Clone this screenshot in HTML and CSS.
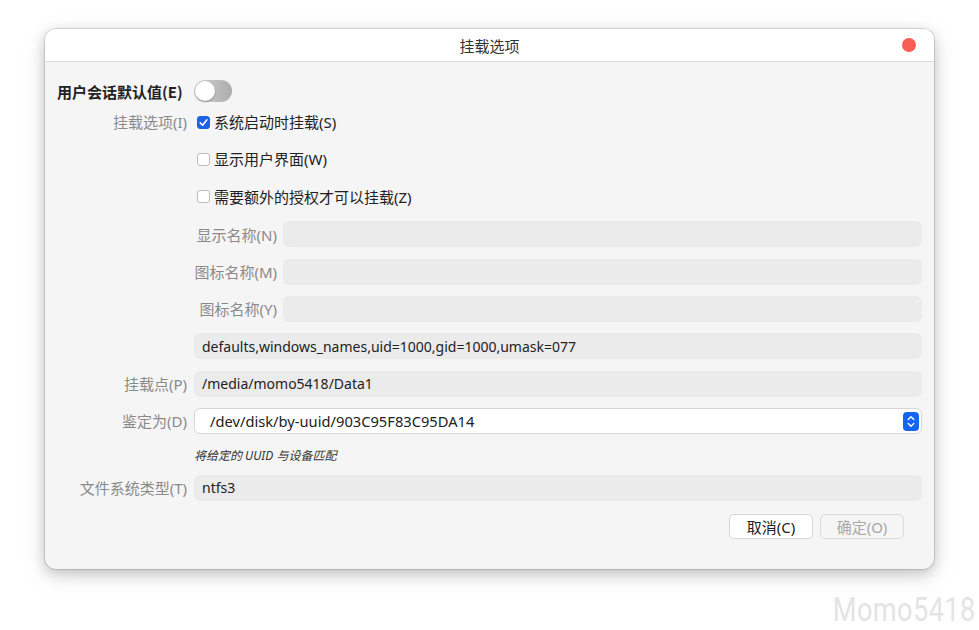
FILE: index.html
```html
<!DOCTYPE html>
<html lang="zh-CN">
<head>
<meta charset="utf-8">
<title>挂载选项</title>
<link rel="stylesheet" href="styles.css">
</head>
<body>
<div class="window">
  <div class="titlebar">
    <span class="title">挂载选项</span>
    <span class="close"></span>
  </div>
  <div class="content">
    <div class="toggle-row">
      <span class="bold-label">用户会话默认值(E)</span>
      <span class="switch"><span class="knob"></span></span>
    </div>
    <div class="form">
      <span class="label">挂载选项(I)</span>
      <label class="check"><span class="box checked"><svg viewBox="0 0 13 13" width="13" height="13"><path d="M3.2 6.8 L5.6 9.2 L9.9 3.8" fill="none" stroke="#fff" stroke-width="1.6" stroke-linecap="round" stroke-linejoin="round"/></svg></span>系统启动时挂载(S)</label>

      <span class="label"></span>
      <label class="check"><span class="box"></span>显示用户界面(W)</label>

      <span class="label"></span>
      <label class="check"><span class="box"></span>需要额外的授权才可以挂载(Z)</label>

      <span class="label"></span>
      <div class="sub"><span class="sublabel">显示名称(N)</span><span class="field"></span></div>

      <span class="label"></span>
      <div class="sub"><span class="sublabel">图标名称(M)</span><span class="field"></span></div>

      <span class="label"></span>
      <div class="sub"><span class="sublabel">图标名称(Y)</span><span class="field"></span></div>

      <span class="label"></span>
      <span class="field">defaults,windows_names,uid=1000,gid=1000,umask=077</span>

      <span class="label">挂载点(P)</span>
      <span class="field">/media/momo5418/Data1</span>

      <span class="label">鉴定为(D)</span>
      <div class="select">
        <span class="select-text">/dev/disk/by-uuid/903C95F83C95DA14</span>
        <span class="select-btn"><svg viewBox="0 0 16 19" width="16" height="19"><path d="M5.2 7.6 L8 4.8 L10.8 7.6 M5.2 11.4 L8 14.2 L10.8 11.4" fill="none" stroke="#fff" stroke-width="1.4" stroke-linecap="round" stroke-linejoin="round"/></svg></span>
      </div>

      <span class="label"></span>
      <span class="hint">将给定的 UUID 与设备匹配</span>

      <span class="label">文件系统类型(T)</span>
      <span class="field">ntfs3</span>
    </div>
    <div class="buttons">
      <button class="btn">取消(C)</button>
      <button class="btn disabled">确定(O)</button>
    </div>
  </div>
</div>
<div class="watermark">Momo5418</div>
</body>
</html>
```
FILE: styles.css
```css
html, body {
  margin: 0;
  padding: 0;
  background: #ffffff;
  width: 979px;
  height: 630px;
  overflow: hidden;
  position: relative;
  font-family: "Noto Sans", "Noto Sans CJK SC", sans-serif;
}

.window {
  margin: 29px 0 0 45px;
  width: 889px;
  height: 540px;
  box-sizing: border-box;
  background: #f5f5f5;
  border-radius: 11px;
  box-shadow: 0 0 0 1px rgba(0,0,0,0.12), 0 4px 14px rgba(0,0,0,0.22), 0 8px 30px rgba(0,0,0,0.08);
  overflow: hidden;
}

.titlebar {
  background: #ffffff;
  border-bottom: 1px solid #dcdcdc;
  box-sizing: border-box;
  height: 33px;
  display: flex;
  align-items: center;
  justify-content: center;
  position: relative;
}

.title {
  font-size: 15px;
  color: #333;
  font-family: "Noto Sans CJK SC", sans-serif;
}

.close {
  position: absolute;
  right: 18px;
  top: 9px;
  width: 14px;
  height: 14px;
  border-radius: 50%;
  background: #f75d52;
}

.content {
  padding: 18px 12px 0 12px;
}

.toggle-row {
  display: flex;
  align-items: center;
  height: 22px;
  margin-bottom: 7px;
}

.bold-label {
  width: 137px;
  font-size: 15px;
  font-weight: bold;
  color: #222;
  font-family: "Noto Sans CJK SC", sans-serif;
}

.switch {
  width: 38px;
  height: 22px;
  border-radius: 11px;
  background: linear-gradient(90deg, #d4d4d4, #acacac);
  position: relative;
  box-sizing: border-box;
}

.knob {
  position: absolute;
  left: 1px;
  top: 1px;
  width: 20px;
  height: 20px;
  border-radius: 50%;
  background: #fff;
  box-shadow: 0 1px 2px rgba(0,0,0,0.3);
}

.form {
  display: grid;
  grid-template-columns: 130px 728px;
  grid-template-rows: repeat(9, 26px) 18px 26px;
  column-gap: 7px;
  row-gap: 11.4px;
  align-items: center;
}

.label {
  text-align: right;
  font-size: 15px;
  color: #8a8a8a;
  white-space: nowrap;
  line-height: 24px;
}

.check {
  display: flex;
  align-items: center;
  font-size: 15px;
  color: #222;
  padding-left: 3px;
  line-height: 24px;
}

.box {
  width: 13px;
  height: 13px;
  box-sizing: border-box;
  border: 1px solid #bdbdbd;
  border-radius: 3px;
  background: #fff;
  margin-right: 4px;
  display: flex;
}

.box.checked {
  background: #1b62e6;
  border-color: #1b62e6;
}

.box.checked svg { margin: -1px; }

.sub {
  display: flex;
  align-items: center;
  height: 26px;
}

.sublabel {
  width: 83px;
  text-align: right;
  font-size: 15px;
  color: #8a8a8a;
  margin-right: 6px;
  white-space: nowrap;
}

.field {
  flex: 1;
  height: 26px;
  background: #ebebeb;
  border-radius: 6px;
  box-sizing: border-box;
  padding: 0 8px;
  display: flex;
  align-items: center;
  font-size: 14px;
  color: #222;
}

.select {
  height: 26px;
  box-sizing: border-box;
  background: #ffffff;
  border: 1px solid #d6d6d6;
  border-radius: 6px;
  display: flex;
  align-items: center;
  justify-content: space-between;
  padding: 0 2px 0 15px;
  font-size: 14.7px;
  color: #222;
}

.select-btn {
  width: 16px;
  height: 19px;
  background: #1565f0;
  border-radius: 4px;
  display: flex;
}

.hint {
  font-size: 12px;
  font-style: italic;
  color: #333;
  height: 18px;
  display: flex;
  align-items: center;
}

.buttons {
  display: flex;
  justify-content: flex-end;
  gap: 7px;
  padding-right: 18px;
  margin-top: 13px;
}

.btn {
  width: 84px;
  height: 25px;
  box-sizing: border-box;
  border: 1px solid #d6d6d6;
  border-radius: 5px;
  background: #fff;
  font-family: "Noto Sans", "Noto Sans CJK SC", sans-serif;
  font-size: 15px;
  color: #222;
  padding: 0;
}

.btn.disabled {
  background: #f5f5f5;
  color: #a8a8a8;
  border-color: #dcdcdc;
}

.watermark {
  position: absolute;
  right: 3px;
  bottom: 1px;
  font-family: "Roboto", sans-serif;
  font-size: 34px;
  color: #e4e4e4;
  transform: scaleX(0.8);
  transform-origin: right bottom;
  letter-spacing: 0.5px;
}
```
